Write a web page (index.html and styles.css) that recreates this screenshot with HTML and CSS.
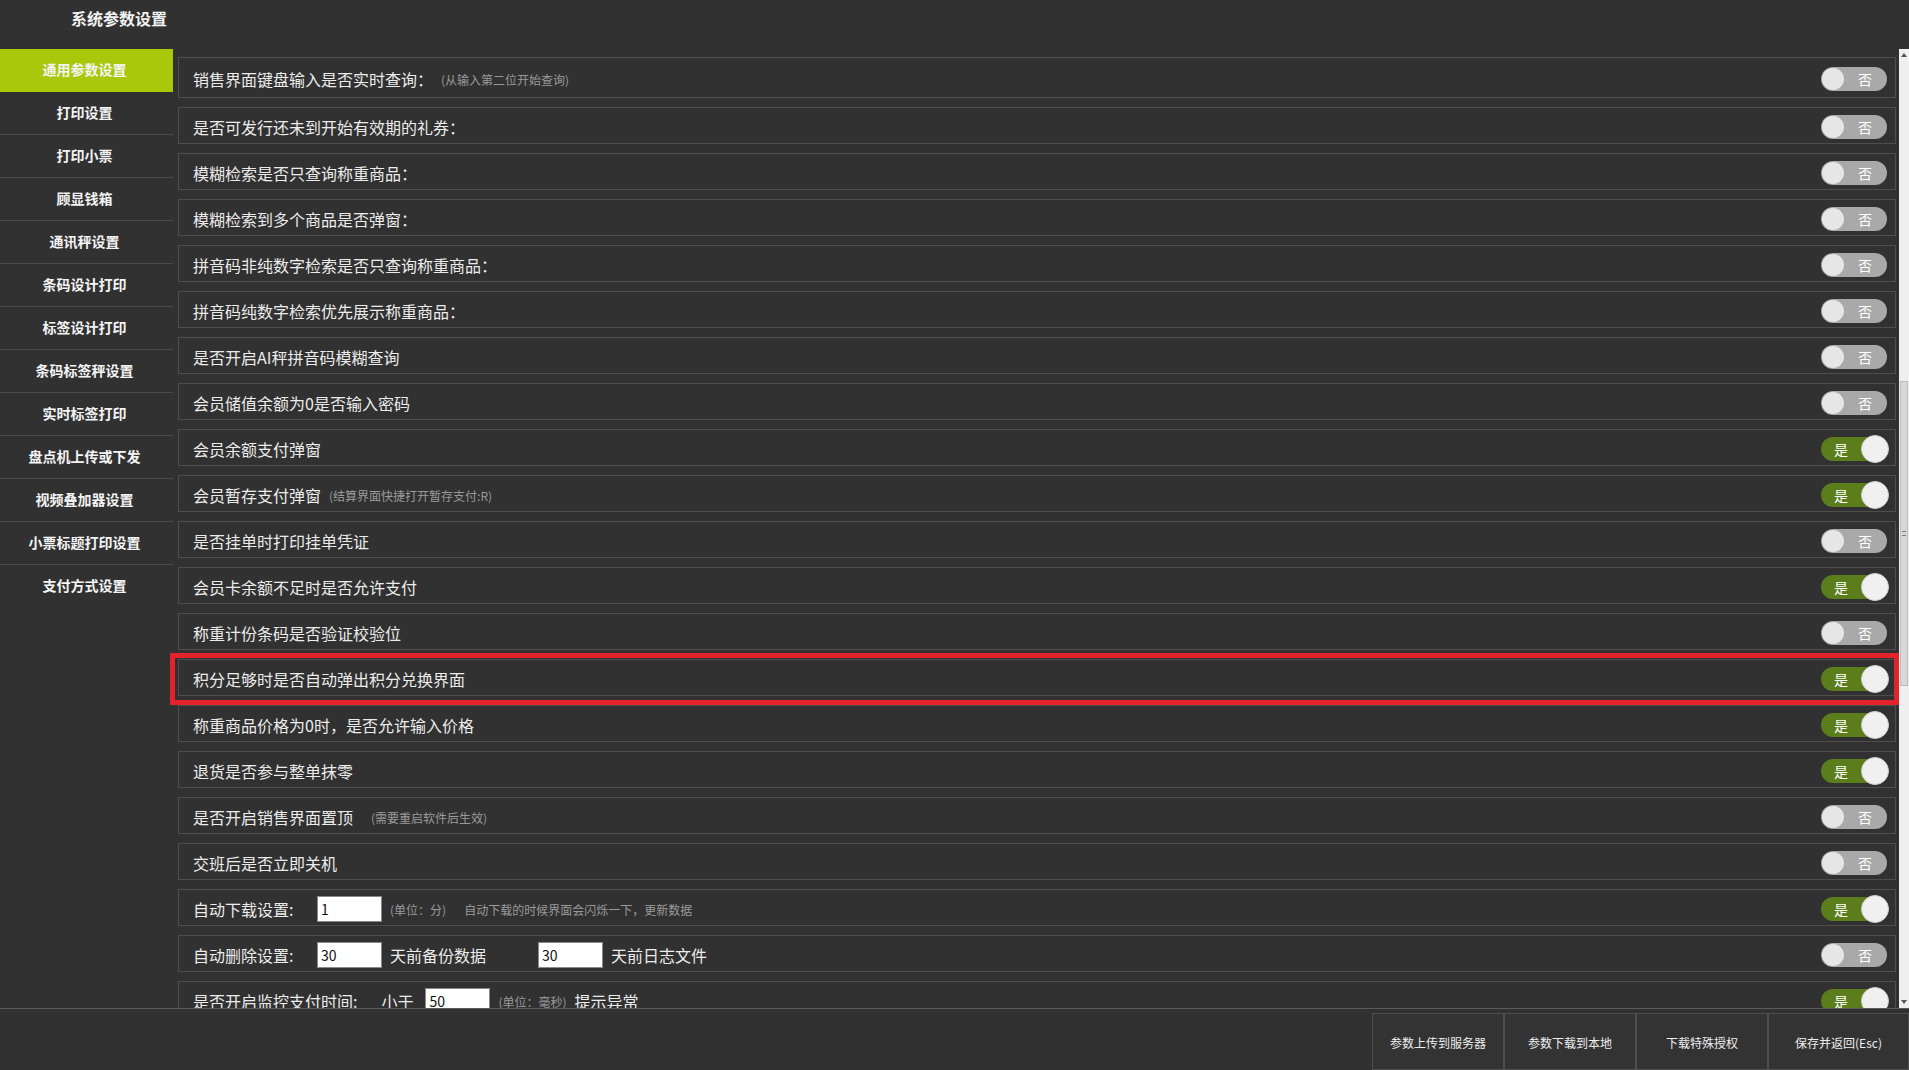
FILE: index.html
```html
<!DOCTYPE html>
<html lang="zh-CN">
<head>
<meta charset="utf-8">
<title>系统参数设置</title>
<link rel="stylesheet" href="styles.css">
</head>
<body>
<div class="app">
  <header class="header"><span class="title">系统参数设置</span></header>
  <div class="body">
    <nav class="sidebar">
      <div class="nav-item active">通用参数设置</div>
      <div class="nav-item">打印设置</div>
      <div class="nav-item">打印小票</div>
      <div class="nav-item">顾显钱箱</div>
      <div class="nav-item">通讯秤设置</div>
      <div class="nav-item">条码设计打印</div>
      <div class="nav-item">标签设计打印</div>
      <div class="nav-item">条码标签秤设置</div>
      <div class="nav-item">实时标签打印</div>
      <div class="nav-item">盘点机上传或下发</div>
      <div class="nav-item">视频叠加器设置</div>
      <div class="nav-item">小票标题打印设置</div>
      <div class="nav-item last">支付方式设置</div>
    </nav>
    <main class="main">
      <div class="rows">
        <div class="row first"><span class="label">销售界面键盘输入是否实时查询：</span><span class="hint">(从输入第二位开始查询)</span><span class="toggle off"><i></i><b>否</b></span></div>
        <div class="row"><span class="label">是否可发行还未到开始有效期的礼券：</span><span class="toggle off"><i></i><b>否</b></span></div>
        <div class="row"><span class="label">模糊检索是否只查询称重商品：</span><span class="toggle off"><i></i><b>否</b></span></div>
        <div class="row"><span class="label">模糊检索到多个商品是否弹窗：</span><span class="toggle off"><i></i><b>否</b></span></div>
        <div class="row"><span class="label">拼音码非纯数字检索是否只查询称重商品：</span><span class="toggle off"><i></i><b>否</b></span></div>
        <div class="row"><span class="label">拼音码纯数字检索优先展示称重商品：</span><span class="toggle off"><i></i><b>否</b></span></div>
        <div class="row"><span class="label">是否开启AI秤拼音码模糊查询</span><span class="toggle off"><i></i><b>否</b></span></div>
        <div class="row"><span class="label">会员储值余额为0是否输入密码</span><span class="toggle off"><i></i><b>否</b></span></div>
        <div class="row"><span class="label">会员余额支付弹窗</span><span class="toggle on"><b>是</b><i></i></span></div>
        <div class="row"><span class="label">会员暂存支付弹窗</span><span class="hint">(结算界面快捷打开暂存支付:R)</span><span class="toggle on"><b>是</b><i></i></span></div>
        <div class="row"><span class="label">是否挂单时打印挂单凭证</span><span class="toggle off"><i></i><b>否</b></span></div>
        <div class="row"><span class="label">会员卡余额不足时是否允许支付</span><span class="toggle on"><b>是</b><i></i></span></div>
        <div class="row"><span class="label">称重计份条码是否验证校验位</span><span class="toggle off"><i></i><b>否</b></span></div>
        <div class="row"><span class="label">积分足够时是否自动弹出积分兑换界面</span><span class="toggle on"><b>是</b><i></i></span></div>
        <div class="row"><span class="label">称重商品价格为0时，是否允许输入价格</span><span class="toggle on"><b>是</b><i></i></span></div>
        <div class="row"><span class="label">退货是否参与整单抹零</span><span class="toggle on"><b>是</b><i></i></span></div>
        <div class="row"><span class="label">是否开启销售界面置顶</span><span class="hint wide">(需要重启软件后生效)</span><span class="toggle off"><i></i><b>否</b></span></div>
        <div class="row"><span class="label">交班后是否立即关机</span><span class="toggle off"><i></i><b>否</b></span></div>
        <div class="row"><span class="label form">自动下载设置:</span><span class="input">1</span><span class="hint">(单位：分)</span><span class="hint far">自动下载的时候界面会闪烁一下，更新数据</span><span class="toggle on"><b>是</b><i></i></span></div>
        <div class="row"><span class="label form">自动删除设置:</span><span class="input">30</span><span class="unit">天前备份数据</span><span class="input gap">30</span><span class="unit">天前日志文件</span><span class="toggle off"><i></i><b>否</b></span></div>
        <div class="row"><span class="label">是否开启监控支付时间:</span><span class="unit small">小于</span><span class="input">50</span><span class="hint">(单位：毫秒)</span><span class="unit">提示异常</span><span class="toggle on"><b>是</b><i></i></span></div>
      </div>
    </main>
    <div class="scrollbar">
      <span class="arrow up"></span>
      <span class="thumb"><em></em></span>
      <span class="arrow down"></span>
    </div>
    <div class="highlight"></div>
  </div>
  <footer class="footer">
    <div class="btn">参数上传到服务器</div>
    <div class="btn">参数下载到本地</div>
    <div class="btn">下载特殊授权</div>
    <div class="btn">保存并返回(Esc)</div>
  </footer>
</div>
</body>
</html>
```

FILE: styles.css
```css
* { box-sizing: border-box; }
html, body { margin: 0; padding: 0; }
body {
  background: #313131;
  font-family: "Noto Sans CJK SC", "Noto Sans", sans-serif;
  color: #ececec;
  width: 1909px;
  height: 1070px;
  overflow: hidden;
}
.app { width: 1909px; height: 1070px; display: flex; flex-direction: column; }

.header { height: 49px; padding: 6px 0 0 71px; flex: none; }
.title { font-size: 16px; font-weight: bold; line-height: 24px; color: #f2f2f2; }

.body { position: relative; flex: 1; display: flex; min-height: 0; }

.sidebar { width: 173px; flex: none; display: flex; flex-direction: column; }
.nav-item {
  height: 43px;
  border-bottom: 1px solid #4a4a4a;
  display: flex; align-items: center; justify-content: center;
  font-size: 14px; font-weight: bold; color: #f4f4f4;
  padding: 0 4px 3px 0;
}
.nav-item.active { background: #a9c80b; border-bottom-color: #a9c80b; }
.nav-item.last { border-bottom: none; }

.main { flex: 1; overflow: hidden; padding: 8px 3px 0 5px; }
.rows { display: flex; flex-direction: column; gap: 9px; }
.row {
  height: 37px;
  flex: none;
  border: 1px solid #4e4e4e;
  display: flex; align-items: center;
  padding: 2px 8px 0 14px;
  font-size: 16px;
}
.row.first { height: 41px; padding-top: 3px; }
.label { color: #ececec; white-space: nowrap; }
.label.form { width: 124px; }
.hint { font-size: 12px; color: #9a9a9a; margin-left: 8px; white-space: nowrap; padding-top: 1px; }
.hint.wide { margin-left: 18px; }
.hint.far { margin-left: 18px; }
.unit { margin-left: 8px; color: #ececec; white-space: nowrap; }
.unit.small { margin-left: 24px; margin-right: 12px; }
.input {
  width: 65px; height: 26px;
  background: #ffffff; border: 1px solid #8a8a8a;
  color: #111; font-size: 14px; line-height: 24px;
  padding-left: 3px;
  flex: none;
}
.input.gap { margin-left: 52px; }

.toggle {
  margin-left: auto;
  width: 66px; height: 24px;
  border-radius: 12px;
  display: flex; align-items: center;
  position: relative;
  flex: none;
}
.toggle b { font-weight: normal; font-size: 14px; color: #fff; line-height: 1; }
.toggle i { display: block; border-radius: 50%; flex: none; }
.toggle.off { background: #a9a9a9; padding-left: 1px; }
.toggle.off i { width: 22px; height: 22px; background: #e6e6e6; }
.toggle.off b { margin-left: 14px; }
.toggle.on { background: #5c7d1c; padding-left: 13px; }
.toggle.on b { flex: 1; }
.toggle.on i { width: 28px; height: 28px; background: #f0f0f0; margin-right: -2px; border: 1px solid #cfcfcf; }

.scrollbar {
  width: 10px; flex: none;
  background: #efefef;
  display: flex; flex-direction: column; align-items: center;
}
.arrow { width: 0; height: 0; border-left: 3px solid transparent; border-right: 3px solid transparent; margin: 4px 0; }
.arrow.up { border-bottom: 4px solid #555; }
.arrow.down { border-top: 4px solid #555; margin-top: auto; }
.thumb {
  width: 8px; height: 305px; margin-top: 320px;
  background: #d8d8d8; border: 1px solid #bdbdbd;
  display: flex; align-items: center; justify-content: center;
}
.thumb em { width: 4px; height: 5px; border-top: 1px solid #777; border-bottom: 1px solid #777; display: block; }

.highlight {
  position: absolute;
  left: 170px; top: 604px;
  width: 1729px; height: 52px;
  border: 5px solid #e3222b;
  pointer-events: none;
}

.footer {
  height: 62px; flex: none;
  border-top: 1px solid #5a5a5a;
  display: flex; justify-content: flex-end; align-items: flex-end;
  padding-top: 4px;
}
.btn {
  width: 132px; height: 57px;
  border: 1px solid #4f4f4f;
  background: #333333;
  display: flex; align-items: center; justify-content: center;
  font-size: 12px; color: #efefef;
  padding-top: 2px;
}
.btn:last-child { width: 141px; }
```
